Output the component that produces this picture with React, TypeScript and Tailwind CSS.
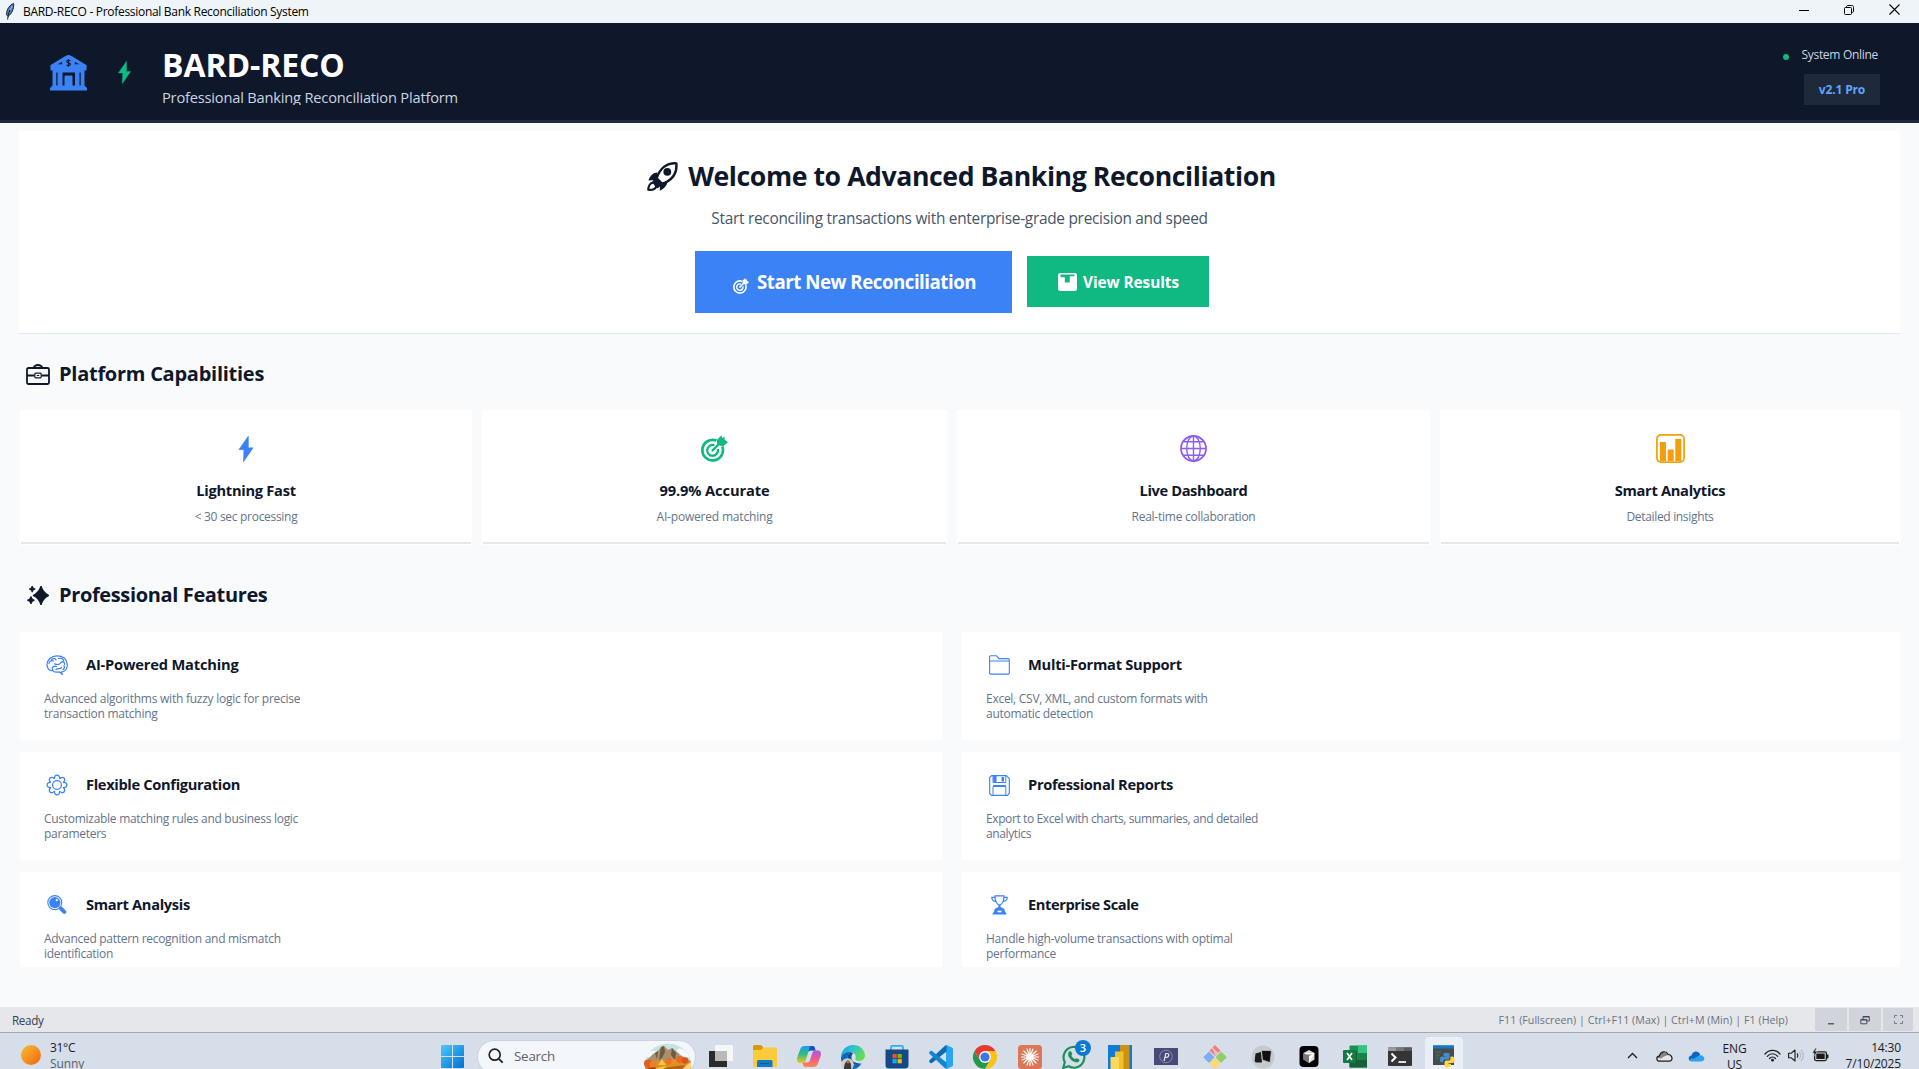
import React from "react";

type Kids = { children?: React.ReactNode };

/* ---------- shared drawings ---------- */

function Svg({ w, h, vb, className = "", children }: { w: number; h: number; vb?: string; className?: string } & Kids) {
  return (
    <svg width={w} height={h} viewBox={vb ?? `0 0 ${w} ${h}`} fill="none" className={`block shrink-0 ${className}`}>
      {children}
    </svg>
  );
}

const Feather = () => (
  <Svg w={10} h={17}>
    <path d="M8.6 .6C5 1.6 1.600 6 1.500 11.500L3 13.500C6.500 11 9.200 6 8.600 .6Z" fill="#4f87c4" stroke="#16202c" strokeWidth="1" />
    <path d="M6.800 3.500C4.500 7 3.200 11 2.600 16.500" stroke="#16202c" strokeWidth="1" />
    <path d="M7 3.200 5 7" stroke="#b8d6f2" strokeWidth="1" />
  </Svg>
);

const Bank = () => (
  <Svg w={37} h={36}>
    <path
      fillRule="evenodd"
      fill="#3b82f6"
      d="M18.500 0C19.500 0 20.500 .6 22 1.300L35.500 9.500C37 10.300 37 11.500 36.500 12V15.500H34.500V30.500L37 33V35.500H0V33L2.500 30.500V15.500H.5V12C0 11.500 0 10.300 1.500 9.500L15 1.300C16.500 .6 17.500 0 18.500 0ZM12 7 7.500 9.300H12.300ZM25 7 24.700 9.300H29.500ZM12.500 17.500V30.500H14.500V21.500C14.500 21 15 20.500 15.500 20.500H21.500C22 20.500 22.500 21 22.500 21.500V30.500H25V17.500ZM6.300 17.500V30.500H7.500V17.500ZM29.500 17.500V30.500H30.700V17.500Z"
    />
    <path d="M20.300 5.800C19.500 4.900 16.800 5 16.800 6.600 16.800 8.400 20.400 7.400 20.400 9.200 20.400 10.900 17.400 10.900 16.600 9.900M18.500 4.300V11.700" stroke="#0f172a" strokeWidth="1.100" />
  </Svg>
);

const Bolt = ({ w, h, className }: { w: number; h: number; className: string }) => (
  <Svg w={w} h={h} vb="0 0 14 24" className={className}>
    <path d="M9.200 0 .3 12.600H5L4.600 24 13.700 10.800H9.300Z" fill="currentColor" stroke="currentColor" strokeWidth=".4" strokeLinejoin="round" />
  </Svg>
);

const Rocket = () => (
  <Svg w={31} h={29}>
    <path d="M29.300 1.400C20 .8 12.500 6.500 9.200 17.500L14 22C24 19.500 30.500 12 29.300 1.400Z" stroke="#0f172a" strokeWidth="2.500" strokeLinejoin="round" />
    <circle cx="20.300" cy="9.800" r="3.900" fill="#0f172a" />
    <path d="M10.500 10.500C6 10.500 3 14 1.500 18.500L9.500 18ZM20.500 19.500C20.300 23 17 27 12.800 28.800L13 21.500Z" fill="#0f172a" />
    <path d="M9.500 14.500 5 20 8 24 10.500 26.500 16.500 21.500Z" fill="#0f172a" />
    <path d="M6.500 20.800C3 20.500 1.500 24 1.200 27.800 5 28 9 27 9.300 23.800" stroke="#0f172a" strokeWidth="2.100" strokeLinejoin="round" />
  </Svg>
);

const Target = ({ s, className }: { s: number; className: string }) => (
  <Svg w={s} h={s} vb="0 0 27 27" className={className}>
    <path d="M15.500 5.600A10.300 10.300 0 1 0 21.300 11.500" stroke="currentColor" strokeWidth="2.700" />
    <path d="M13.500 10.300A5.400 5.400 0 1 0 16.800 14" stroke="currentColor" strokeWidth="2.300" />
    <path d="M11.600 15.400 19 8" stroke="currentColor" strokeWidth="2.400" strokeLinecap="round" />
    <path d="M16 9.800V5L20.300 .2 21.300 3.300 23.500 1.500 23.700 4.800 27 7.200 22 11.300Z" fill="currentColor" />
  </Svg>
);

const ResultsIcon = () => (
  <Svg w={19} h={18}>
    <path fillRule="evenodd" d="M2.500 0H16.500A2.500 2.500 0 0 1 19 2.500V15.500A2.500 2.500 0 0 1 16.500 18H2.500A2.500 2.500 0 0 1 0 15.500V2.500A2.500 2.500 0 0 1 2.500 0ZM2.500 1.600V4.200H6.800V9.500H11.800V3.200H16.500V1.600Z" fill="#fff" />
  </Svg>
);

const Briefcase = () => (
  <Svg w={24} h={21}>
    <rect x="1" y="4" width="22" height="16" rx="1.500" stroke="#0f172a" strokeWidth="1.800" />
    <path d="M7.500 4C8.500 1.500 9.500 1 12 1S15.500 1.500 16.500 4M1 11.500H8.500M15.500 11.500H23" stroke="#0f172a" strokeWidth="1.800" />
    <rect x="8.800" y="9.200" width="6.400" height="4.600" rx="1" stroke="#0f172a" strokeWidth="1.200" />
    <path d="M10.800 11.500H13.200" stroke="#0f172a" />
  </Svg>
);

const Sparkles = () => (
  <Svg w={22} h={19}>
    <path d="M14 .3Q16 6.800 21.700 9.500 16 12.200 14 18.700 12 12.200 6.300 9.500 12 6.800 14 .3Z" fill="#0f172a" stroke="#0f172a" strokeWidth="1.300" strokeLinejoin="round" />
    <path d="M5.200 0Q5.700 2.600 8.200 3.100 5.700 3.600 5.200 6.200 4.700 3.600 2.200 3.100 4.700 2.600 5.200 0ZM4 10.500Q4.800 13.600 7.500 14.200 4.800 14.800 4 18 3.200 14.800 .3 14.200 3.200 13.600 4 10.500Z" fill="#0f172a" stroke="#0f172a" strokeWidth=".9" />
  </Svg>
);

const GlobeIcon = () => (
  <Svg w={27} h={27} className="text-[#8b5cf6]">
    <g stroke="currentColor" strokeWidth="1.400">
      <circle cx="13.500" cy="13.500" r="12.500" strokeWidth="1.800" />
      <ellipse cx="13.500" cy="13.500" rx="6.800" ry="12.500" />
      <path d="M13.500 1V26M1 13.500H26M3.300 6.800H23.700M3.300 20.200H23.700" />
    </g>
  </Svg>
);

const ChartIcon = () => (
  <Svg w={29} h={29}>
    <rect x=".9" y=".9" width="27.200" height="27.200" rx="4" stroke="#f59e0b" strokeWidth="1.700" />
    <path d="M4 8H10V27H4ZM11.700 15.500H17.700V27H11.700ZM19.300 5H25.300V27H19.300Z" fill="#f59e0b" />
  </Svg>
);

const BrainIcon = () => (
  <Svg w={22} h={20}>
    <g stroke="#3b82f6" strokeWidth="1.250" strokeLinecap="round">
      <path d="M6.500 15.500C3 16 .8 12.500 1 9.500 1.200 5 5 .8 11 .8 17 .8 21 4 21.300 9.500 21.600 14 18.500 16.500 15.500 17L16.200 19.300 13.500 17C10 17.500 7 17.300 6.500 14.500 5.500 12 8 10.500 10.500 11.500M3 8.500C3 6 5.500 5 7.500 6M5.500 4.500C7.500 3 9.500 3.500 10 5M12.500 3.500C15 2.500 17.500 4 17.800 6M8.500 8.800C11 9.800 14 9.500 15 7.500 16 6 19 7 18.500 9.500M10 14.500C12 12.500 14 14.500 15.500 12.500M17 14.500C18.500 13.500 19 12 18 11" />
    </g>
  </Svg>
);

const PETALS = [0, 45, 90, 135, 180, 225, 270, 315];

const GearIcon = () => (
  <Svg w={22} h={22} vb="-11 -11 22 22">
    <g stroke="#3b82f6" strokeWidth="1.250">
      <circle r="4.400" />
      {PETALS.map((a) => (
        <path key={a} transform={`rotate(${a})`} d="M-2.500-6C-3.400-11.200 3.400-11.200 2.500-6" />
      ))}
    </g>
  </Svg>
);

const MagnifierIcon = () => (
  <Svg w={20} h={20}>
    <circle cx="7.800" cy="7.600" r="7" stroke="#3b82f6" strokeWidth="1.100" />
    <circle cx="7.800" cy="7.600" r="5.600" fill="#3b82f6" />
    <circle cx="9.800" cy="5.200" r="1.100" fill="#fff" />
    <path d="M13.600 13.200 17.300 16.900" stroke="#3b82f6" strokeWidth="3.900" strokeLinecap="round" />
  </Svg>
);

const FolderIcon = () => (
  <Svg w={21} h={20}>
    <path d="M.6 18.400V1.500L1.500.8H7.500L10 3.600H19.500L20.300 4.400V18.400L19.500 19.100H1.400ZM.6 6H20" stroke="#3b82f6" strokeWidth="1.100" />
  </Svg>
);

const FloppyIcon = () => (
  <Svg w={21} h={21}>
    <path d="M2.600.6H17.200L20.300 3.400V18.200L18.400 20.300H2.600L.7 18.400V2.500Z" stroke="#3b82f6" strokeWidth="1.150" />
    <path d="M4 .6V7.500H16.800V.6M4 20V11.500H16.800V20M4 10.500H17" stroke="#3b82f6" strokeWidth="1" />
    <path d="M4.300 1H7.500V7.300H4.300ZM12.500 2H15V6.500H12.500Z" fill="#3b82f6" />
  </Svg>
);

const TrophyIcon = () => (
  <Svg w={17} h={20}>
    <path d="M4 .8H13C13 5 12.300 9 8.500 10 4.700 9 4 5 4 .8ZM3.800 2.300H.8C.8 4.500 2 6.500 4.500 6.300M13.200 2.300H16.200C16.200 4.500 15 6.500 12.500 6.300" stroke="#3b82f6" strokeWidth="1.200" />
    <path d="M7.500 10H9.500V12L13.500 14V15.500L15.800 19.600H1.200L3.500 15.500V14L7.500 12Z" fill="#3b82f6" />
    <path d="M6.500 15.700H10.500V17.300H6.500Z" fill="#fff" />
  </Svg>
);

/* ---------- window chrome ---------- */

function TitleBar() {
  return (
    <div className="flex h-[23px] items-center bg-[#eff4f9] pl-[5px] pr-[19px]">
      <Feather />
      <span className="ml-2 text-xs leading-[22px] tracking-[-0.3px] text-black">BARD-RECO - Professional Bank Reconciliation System</span>
      <div className="ml-auto flex items-center gap-[35px] pb-[4px] text-black">
        <Svg w={10} h={10}><path d="M0 5.500H10" stroke="currentColor" /></Svg>
        <Svg w={10} h={10}>
          <rect x=".5" y="2.500" width="7" height="7" rx="1" stroke="currentColor" />
          <path d="M2.500 2.500V2C2.500 1 3 .5 4 .5H7.500C9 .5 9.500 1 9.500 2.500V6C9.500 7 9 7.500 8 7.500" stroke="currentColor" />
        </Svg>
        <Svg w={11} h={11}><path d="M.5.5 10.500 10.500M10.500.5.5 10.500" stroke="currentColor" strokeWidth="1.100" /></Svg>
      </div>
    </div>
  );
}

function Header() {
  return (
    <header className="flex h-[100px] border-b-[3px] border-[#1e293b] bg-[#0f172a] pl-[50px] pr-[39px]">
      <div className="pt-[32px]"><Bank /></div>
      <div className="ml-[31px] pt-[38px]"><Bolt w={13} h={23} className="text-[#10b981]" /></div>
      <div className="ml-[31px] pt-[21px]">
        <h1 className="text-[32px] font-bold leading-[41px] tracking-[-0.1px] text-white">BARD-RECO</h1>
        <p className="h-[20px] overflow-hidden text-[14.67px] leading-[24px] tracking-[-0.2px] text-[#cbd5e1]">Professional Banking Reconciliation Platform</p>
      </div>
      <div className="ml-auto flex flex-col items-end pt-[23px]">
        <div className="flex items-center gap-[12px] pr-[2px]">
          <span className="mt-[3px] size-[6px] rounded-full bg-[#10b981]" />
          <span className="text-xs leading-[18px] tracking-[-0.3px] text-[#cbd5e1]">System Online</span>
        </div>
        <div className="mt-[10px] h-[31px] w-[76px] bg-[#1e293b] text-center text-xs font-bold leading-[31px] tracking-[-0.15px] text-[#60a5fa]">v2.1 Pro</div>
      </div>
    </header>
  );
}

/* ---------- content ---------- */

function Hero() {
  return (
    <section className="mx-[19px] mt-[8px] flex h-[203px] flex-col items-center border-b border-[#e2e8f0] bg-white pt-[27px]">
      <div className="flex h-[36px] items-center gap-[10px] pl-[4px]">
        <Rocket />
        <h2 className="text-[26.67px] font-bold leading-[34px] tracking-[-0.43px] text-[#0f172a]">Welcome to Advanced Banking Reconciliation</h2>
      </div>
      <p className="mt-[13px] text-[15.4px] leading-6 tracking-[-0.27px] text-[#475569]">Start reconciling transactions with enterprise-grade precision and speed</p>
      <div className="mt-[20px] flex items-start gap-[15px] pr-[15px]">
        <button className="flex h-[62px] w-[317px] items-center bg-[#3b82f6] pl-[38px]">
          <Target s={16} className="mt-2 text-white" />
          <span className="ml-2 whitespace-nowrap text-[18.67px] font-bold leading-6 tracking-[-0.47px] text-white">Start New Reconciliation</span>
        </button>
        <button className="mt-[5px] flex h-[51px] w-[182px] items-center bg-[#10b981] pl-[31px]">
          <ResultsIcon />
          <span className="ml-[6px] mt-px whitespace-nowrap text-[15.33px] font-bold leading-6 tracking-[-0.05px] text-white">View Results</span>
        </button>
      </div>
    </section>
  );
}

function SectionTitle({ icon, children, className }: { icon: React.ReactNode; className: string } & Kids) {
  return (
    <div className={`flex items-center ${className}`}>
      {icon}
      <h3 className="text-[20px] font-bold leading-7 text-[#0f172a]">{children}</h3>
    </div>
  );
}

function Capability({ icon, title, sub, titleClass, subClass }: { icon: React.ReactNode; title: string; sub: string; titleClass: string; subClass: string }) {
  return (
    <div className="flex flex-col items-center bg-white px-px pb-px">
      <div className="flex h-[69px] items-center pt-[8px]">{icon}</div>
      <h4 className={`text-[14.67px] font-bold leading-[22px] text-[#0f172a] ${titleClass}`}>{title}</h4>
      <p className={`mt-[7px] text-xs leading-[18px] text-[#64748b] ${subClass}`}>{sub}</p>
      <div className="mt-auto h-[2px] w-full bg-[#e5e7eb]" />
    </div>
  );
}

function Feature({ icon, title, lines, titleClass, lineClass }: { icon: React.ReactNode; title: string; lines: [string, string]; titleClass: string; lineClass: string }) {
  return (
    <div className="overflow-hidden bg-white pl-[24px] pt-[21px]">
      <div className="flex h-[24px] items-center">
        <div className="flex w-[26px] justify-center">{icon}</div>
        <h4 className={`mb-[2px] ml-[16px] text-[14.67px] font-bold leading-6 text-[#0f172a] ${titleClass}`}>{title}</h4>
      </div>
      <p className={`mt-[14px] text-xs leading-[15px] text-[#64748b] ${lineClass}`}>
        {lines[0]}
        <br />
        {lines[1]}
      </p>
    </div>
  );
}

function StatusBar() {
  return (
    <div className="flex h-[26px] items-center border-b border-[#a3a7ae] bg-[#e5e7eb] pl-3 pr-[6px]">
      <span className="text-[11.7px] leading-5 tracking-[-0.35px] text-[#374151]">Ready</span>
      <span className="ml-auto mr-[27px] text-[10.67px] leading-5 tracking-[0.03px] text-[#6b7280]">F11 (Fullscreen) | Ctrl+F11 (Max) | Ctrl+M (Min) | F1 (Help)</span>
      <div className="flex h-[23px] gap-[2px] text-[#374151]">
        <div className="flex w-8 items-center justify-center bg-[#d1d5db]">
          <Svg w={10} h={10}><path d="M2 8.800H8" stroke="currentColor" strokeWidth="1.200" /></Svg>
        </div>
        <div className="flex w-8 items-center justify-center bg-[#d1d5db]">
          <Svg w={10} h={10}><path d="M3 4V1.500H9.300V6H7M.8 4.500H6.800V8.800H.8ZM.8 5H6.800M3 2H9" stroke="currentColor" strokeWidth=".9" /></Svg>
        </div>
        <div className="flex w-[30px] items-center justify-center bg-[#d1d5db] text-[#6b7280]">
          <Svg w={9} h={9}><path d="M.5 3V.5H3M6 .5H8.500V3M8.500 6V8.500H6M3 8.500H.5V6" stroke="currentColor" strokeWidth=".9" /></Svg>
        </div>
      </div>
    </div>
  );
}

/* ---------- taskbar ---------- */

const Windows = () => (
  <Svg w={23} h={23}>
    <defs>
      <linearGradient id="win" x1="0" y1="0" x2="1" y2="1"><stop stopColor="#4cc9fb" /><stop offset="1" stopColor="#0070d0" /></linearGradient>
    </defs>
    <path d="M0 1A1 1 0 0 1 1 0H11V11H0ZM12 0H22A1 1 0 0 1 23 1V11H12ZM0 12H11V23H1A1 1 0 0 1 0 22ZM12 12H23V22A1 1 0 0 1 22 23H12Z" fill="url(#win)" />
  </Svg>
);

const SearchArt = () => (
  <Svg w={49} h={28}>
    <defs>
      <clipPath id="art"><ellipse cx="25" cy="22" rx="23" ry="21.500" /></clipPath>
    </defs>
    <g clipPath="url(#art)">
      <rect width="49" height="28" fill="#c3e3e6" />
      <path d="M3 13C6 7 11 7 14 9L18 14H3ZM34 7C37 3 43 8 47 14H32Z" fill="#f5f9f9" />
      <path d="M3 18 10 11 15 8 18 4 21 3 25 7 29 5 34 9 39 13 46 17V22H3Z" fill="#a98f6a" />
      <path d="M18 4 21 3 22 9 19 15 16 17ZM29 5 33 10 32 17 28 12ZM12 10 15 8 14 16Z" fill="#6d5b48" />
      <path d="M36 11 42 16 37 17Z" fill="#d1b88c" />
      <rect y="17.500" width="49" height="11" fill="#d98a24" />
    </g>
    <path d="M5 21 14 19 24 20 36 18 44 19 48 22 46 28H8Z" fill="#dd8f26" />
    <circle cx="5" cy="20.500" r="4" fill="#e2601c" />
    <circle cx="10" cy="21.500" r="3.300" fill="#ee7f2a" />
    <circle cx="37" cy="16.500" r="3.600" fill="#ea6a1e" />
    <circle cx="42" cy="17.500" r="3.200" fill="#dd5418" />
    <circle cx="26" cy="18" r="3" fill="#ee6f22" />
    <circle cx="31" cy="18.500" r="2.600" fill="#f08a30" />
    <path d="M15 22 19 16 23 22ZM10 26 22 23 28 28H10Z" fill="#f8c53e" />
    <path d="M20 25 42 22 38 28H24Z" fill="#b06414" />
    <path d="M40 26 44 22 48 19 48.500 23 46 28H41Z" fill="#fbd585" />
    <path d="M4 25 12 24 14 28H7Z" fill="#a34a12" />
  </Svg>
);

const TaskView = () => (
  <Svg w={24} h={24}>
    <rect x="0" y="6" width="18" height="16" fill="#2b2b2b" />
    <rect x="6" y="0" width="18" height="16" fill="#f5f6f8" />
    <rect x="6" y="6" width="12" height="10" fill="#b9b9b9" />
  </Svg>
);

const Explorer = () => (
  <Svg w={24} h={24}>
    <path d="M0 1.500Q0 0 1.500 0H8L10 2V6H0Z" fill="#d99a0b" />
    <path d="M0 5H8L10.500 2.500H23Q24 2.500 24 3.500V21Q24 22 23 22H1Q0 22 0 21Z" fill="#fccb3b" />
    <path d="M4 22V16.500Q4 15 5.500 15H18Q19.500 15 19.500 16.500V22Z" fill="#1079c9" />
    <path d="M7 18.500H16" stroke="#0b5a9c" strokeWidth="1" />
  </Svg>
);

const Copilot = () => (
  <Svg w={24} h={24}>
    <defs>
      <linearGradient id="cpa" x1="0" y1="0" x2="0" y2="1"><stop stopColor="#1a9cf0" /><stop offset=".5" stopColor="#36bd79" /><stop offset="1" stopColor="#f2c81f" /></linearGradient>
      <linearGradient id="cpb" x1="0" y1="0" x2="0" y2="1"><stop stopColor="#a35be6" /><stop offset=".5" stopColor="#ee5a8c" /><stop offset="1" stopColor="#fb8a4b" /></linearGradient>
    </defs>
    <path d="M8 1H15.500C17.500 1 18 3 18.500 5.500H14C12 5.500 11.500 6.500 11 8L8.500 16C8 17.500 6.500 18 5 18H3C0 18-.5 14.500.5 11.500L3.500 3.500C4.300 1.800 5.500 1 8 1Z" fill="url(#cpa)" />
    <path d="M15.500 1C17.500 1 18 3 18.500 5.500H14C12.500 5.500 12 6 11.500 7L13 1Z" fill="#1b50c4" />
    <path d="M16 22H8.500C6.500 22 6 20 5.500 17.500H10C12 17.500 12.500 16.500 13 15L15.500 7.500C16 6 17.500 5.500 19 5.500H21C24 5.500 24.500 8.500 23.500 11.500L20.500 19.500C19.700 21.200 18.500 22 16 22Z" fill="url(#cpb)" />
  </Svg>
);

const Edge = () => (
  <Svg w={24} h={24}>
    <defs>
      <linearGradient id="edg" x1="0" y1="0" x2="1" y2=".5"><stop stopColor="#1a9ce8" /><stop offset=".5" stopColor="#2fc5c8" /><stop offset="1" stopColor="#68dc51" /></linearGradient>
    </defs>
    <path d="M12 0C19 0 24 5 24 10.500 24 14 21 16 18 16 15.500 16 14 15 14.500 13.500 16 10 12.500 7 9 7 4 7 1 10.500 0 13.500-.5 6 5 0 12 0Z" fill="url(#edg)" />
    <path d="M0 13C1 9 5 6.500 9 7 7 8.500 6.500 11 7 14 8 18.500 13 21 20 19.500 17.500 22.500 15 24 12 24 5.500 24 0 19 0 13Z" fill="#1068bd" />
    <path d="M9 7C7 8.500 6.500 11 7 14 8 18.500 13 21 20 19.500 22 18 16 19 13 17 9.500 14.500 10 11 12 8Z" fill="#0d4d94" />
    <circle cx="6.500" cy="19.500" r="6.300" fill="#cfd0cc" />
    <path d="M3 24C3 20 4 17.500 5.500 16.500L8.500 16.500C10 18 10.500 21 10 24Z" fill="#3e3835" />
    <circle cx="7" cy="16.800" r="1.700" fill="#9a7862" />
  </Svg>
);

const Store = () => (
  <Svg w={24} h={24}>
    <path d="M6 5V2Q6 .8 7.200.8H16.800Q18 .8 18 2V5" stroke="#29b1f0" strokeWidth="1.700" />
    <path d="M.5 4.500H23.500V20Q23.500 23.500 20 23.500H4Q.5 23.500.5 20Z" fill="#164a86" />
    <rect x="7.500" y="9" width="4.200" height="4.200" fill="#f25022" />
    <rect x="12.600" y="9" width="4.200" height="4.200" fill="#7fba00" />
    <rect x="7.500" y="14.100" width="4.200" height="4.200" fill="#1ea7ee" />
    <rect x="12.600" y="14.100" width="4.200" height="4.200" fill="#ffb900" />
  </Svg>
);

const VsCode = () => (
  <Svg w={24} h={24}>
    <path d="M17.500 0 23 2.500Q24 3 24 4V20Q24 21 23 21.500L17.500 24 17 23V1Z" fill="#2aa5f0" />
    <path d="M17.500 0V6.500L3 18 1.500 18.200.2 16.800V15.500L16 .8Z" fill="#0a6cb3" />
    <path d="M17.500 24V17.500L3 6 1.500 5.800.2 7.200V8.500L16 23.200Z" fill="#1386cf" />
  </Svg>
);

const Chrome = () => (
  <Svg w={24} h={24} vb="-12 -12 24 24">
    <path d="M0 0-10.400-6A12 12 0 0 1 10.400-6Z" fill="#e33b2e" />
    <path d="M-5.200 3-10.400-6A12 12 0 0 0 0 12L5.200 3Z" fill="#219a4b" />
    <path d="M5.200 3 0 12A12 12 0 0 0 10.400-6H0Z" fill="#fbc116" />
    <path d="M-10.400-6-5.200 3 0-6Z" fill="#e33b2e" />
    <circle r="5.900" fill="#fff" />
    <circle r="4.600" fill="#3b78e7" />
  </Svg>
);

const Claude = () => (
  <Svg w={24} h={24} vb="-12 -12 24 24">
    <rect x="-12" y="-12" width="24" height="24" rx="3.500" fill="#d97757" />
    <path d="M0-8.500V8.500M-8.500 0H8.500M-6.200-6 6.200 6M6.200-6-6.200 6M-3-8 3 8M3-8-3 8M-8-3 8 3M8-3-8 3" stroke="#fff" strokeWidth="1.150" strokeLinecap="round" />
  </Svg>
);

const WhatsApp = () => (
  <div className="relative">
    <Svg w={24} h={24}>
      <path d="M1.300 22.800 2.800 17.200A10.400 10.400 0 1 1 6.800 21.300Z" stroke="#1f8f5c" strokeWidth="2.200" />
      <path d="M7.200 6.500C8.500 5.300 9.200 6 10.300 9 9.300 10.300 9.200 10.500 10.500 12.300 12 14 13.500 14.300 14.800 13.300 17.500 14.500 18.200 15 17 16.500 15 18.500 11 17 8.800 14.600 6.500 12 5 8.700 7.200 6.500Z" fill="#1f8f5c" />
    </Svg>
    <span className="absolute -right-[5px] -top-[5px] size-4 rounded-full bg-[#0f78d4] text-center text-[11px] font-semibold leading-4 text-white">3</span>
  </div>
);

const PowerBi = () => (
  <Svg w={24} h={24}>
    <rect width="24" height="24" fill="#0f7bd4" />
    <rect x="12" width="9.500" height="24" fill="#cf9210" />
    <rect x="7" y="6.500" width="8.500" height="17.500" fill="#f2c12e" />
    <rect x="2.500" y="12" width="8.500" height="12" fill="#f8d95a" />
  </Svg>
);

const PApp = () => (
  <Svg w={24} h={24}>
    <rect x="0" y="3" width="24" height="17" fill="#484a78" />
    <circle cx="12" cy="11.500" r="6.300" stroke="#8f90ad" strokeWidth=".9" />
    <path d="M10 16 11.800 8.500H13.500C15.500 8.500 15 12.300 12.800 12.300H11" stroke="#e5e5ee" strokeWidth="1.200" />
  </Svg>
);

const Git = () => (
  <Svg w={24} h={24}>
    <path d="M12 0 17.500 5.500 12 11 6.500 5.500Z" fill="#f87c7c" />
    <path d="M18 6.500 23.800 12.200 18 18 12.500 12.200Z" fill="#8fce69" />
    <path d="M6 6.500 11.500 12.200 6 18 .2 12.200Z" fill="#7fabf7" />
    <path d="M12 13 17.500 18.500 12 24 6.500 18.500Z" fill="#fbd96b" />
    <path d="M9 2.500 12 6.500V10M12 6 15 9" stroke="#d8dfea" strokeWidth="1.100" />
  </Svg>
);

const Tiles = () => (
  <Svg w={24} h={24}>
    <circle cx="12" cy="12" r="11.500" fill="#c5cacd" />
    <path d="M4.500 8.500 10 7 11 17.500H5.500Q3.500 17.500 3.700 15.500Z" fill="#1b1b1d" />
    <path d="M10.500 5.500H19Q20.500 5.500 20.300 7L19 17.500 11.500 15Z" fill="#101012" stroke="#c5cacd" strokeWidth=".7" />
  </Svg>
);

const Cursor = () => (
  <Svg w={24} h={24}>
    <rect x="2.500" y="1" width="19" height="21" rx="4" fill="#050505" />
    <path d="M12 5 17.500 8V14.500L12 18 6.500 14.500V8Z" fill="#d9d9d9" />
    <path d="M6.500 8 17.500 8 12 18V11Z" fill="#fff" />
    <path d="M6.500 8 12 11V18L6.500 14.500ZM12 11 9 9.500H15Z" fill="#777" />
  </Svg>
);

const Excel = () => (
  <Svg w={24} h={24}>
    <path d="M6.500 1.500Q6.500 .5 7.500.5H24V22.500H7.500Q6.500 22.500 6.500 21.500Z" fill="#1e8f51" />
    <path d="M15 .5H24V8H15Z" fill="#33c481" />
    <path d="M15 8H24V15H15Z" fill="#1d8048" />
    <path d="M6.500 15H24V22.500H6.500Z" fill="#17603a" />
    <path d="M6.500 6H14V18H6.500Z" fill="#0f5a33" />
    <rect y="5" width="13" height="13" rx="1" fill="#107c41" />
    <path d="M4 8 9 15M9 8 4 15" stroke="#fff" strokeWidth="1.700" />
  </Svg>
);

const Terminal = () => (
  <Svg w={24} h={24}>
    <rect x="0" y="2.500" width="24" height="18.500" rx="1" fill="#353535" />
    <path d="M0 2.500H8V6H0Z" fill="#9a9a9a" />
    <path d="M8 2.500H16V6H8Z" fill="#777" />
    <path d="M16 2.500H24V6H16Z" fill="#5b5b5b" />
    <path d="M3.500 8.500 7.500 12.500 3.500 16.500" stroke="#fff" strokeWidth="2" />
    <path d="M10.500 17H18" stroke="#fff" strokeWidth="1.700" />
  </Svg>
);

const Python = () => (
  <Svg w={24} h={24}>
    <rect x="1" y=".5" width="21" height="19.500" fill="#454c4f" />
    <rect x="1" y=".5" width="21" height="3" fill="#1478c8" />
    <path d="M3.500 7H9M3.500 10H8M3.500 13H7" stroke="#49784c" strokeWidth="1" />
    <path d="M11.500 8.500Q14.500 7 17.500 8.500V13Q17.500 14.500 16 14.500H13Q11 14.500 11 17.500 7 17.500 8 13 8.500 11.500 10 11.500H14V11H11.500Z" fill="#4a8cc7" />
    <path d="M18.500 11.500H20.500Q23 12 22.500 16 22 18 20.500 18H16.500V18.800H19V21Q16 23.500 12.500 21.500V17.500Q12.500 15.500 14.500 15.500H17Q18.500 15.500 18.500 13.500Z" fill="#fbd548" />
  </Svg>
);

function Taskbar() {
  const icons: [string, React.ReactNode][] = [
    ["ml-[13px]", <TaskView />],
    ["ml-[20px]", <Explorer />],
    ["ml-[20px]", <Copilot />],
    ["ml-[20px]", <Edge />],
    ["ml-[20px]", <Store />],
    ["ml-[20px]", <VsCode />],
    ["ml-[20px]", <Chrome />],
    ["ml-[21px]", <Claude />],
    ["ml-[20px]", <WhatsApp />],
    ["ml-[22px]", <PowerBi />],
    ["ml-[22px]", <PApp />],
    ["ml-[25px]", <Git />],
    ["ml-[24px]", <Tiles />],
    ["ml-[22px]", <Cursor />],
    ["ml-[22px]", <Excel />],
    ["ml-[21px]", <Terminal />],
  ];
  return (
    <footer className="flex h-[36px] items-start overflow-hidden bg-[#d6deea] text-xs text-[#1b1b1b]">
      <div className="flex w-[441px] shrink-0 pl-[21px] pt-[3px]">
        <div className="mt-[9px] size-5 rounded-full bg-linear-to-br from-[#f0bf32] to-[#f2600c]" />
        <div className="ml-[9px] whitespace-nowrap leading-4">
          <div className="pt-[4px] tracking-[-0.3px]">31°C</div>
          <div className="tracking-[-0.1px] text-[#5b6068]">Sunny</div>
        </div>
      </div>
      <div className="flex shrink-0 items-start">
        <div className="mt-3"><Windows /></div>
        <div className="ml-[13px] mt-[7px] flex h-[34px] w-[219px] items-start rounded-full border border-[#c9d2de] bg-[#f3f6fa] pl-[10px]">
          <div className="mt-[7px]">
            <Svg w={16} h={16}><circle cx="6.700" cy="6.700" r="5.500" stroke="#222" strokeWidth="1.700" /><path d="M10.800 10.800 14.700 14.700" stroke="#222" strokeWidth="1.900" /></Svg>
          </div>
          <span className="ml-[10px] mt-[5px] text-[13.33px] leading-5 tracking-[-0.2px] text-[#5f6266]">Search</span>
          <div className="ml-auto mr-[3px] mt-[2px]"><SearchArt /></div>
        </div>
        {icons.map(([gap, icon], i) => (
          <div key={i} className={`mt-3 shrink-0 ${gap}`}>{icon}</div>
        ))}
        <div className="ml-[13px] mt-[4px] flex h-10 w-[38px] justify-center rounded-[4px] bg-[#e9eff5] pt-2"><Python /></div>
      </div>
      <div className="ml-auto flex items-start pr-[18px]">
        <Svg w={11} h={7} className="mt-[19px]"><path d="M1 6 5.500 1.500 10 6" stroke="#1b1b1b" strokeWidth="1.300" /></Svg>
        <Svg w={17} h={12} className="ml-[18px] mt-[17px]">
          <path d="M4 11.200C-.3 11.200 0 6.300 3.500 5.800 4.500 1.500 10 0 12.200 4.500 16.500 4.800 17.500 10.500 13.500 11.200Z" fill="#e7e7e7" />
          <path d="M1.500 8C2 6 3 5.800 4 5.800 5.500 1.500 10 1 12 5L8 6.500 5 8.500Z" fill="#858585" />
          <path d="M4 11.200C-.3 11.200 0 6.300 3.500 5.800 4.500 1.500 10 0 12.200 4.500 16.500 4.800 17.500 10.500 13.500 11.200Z" stroke="#1b1b1b" strokeWidth="1.200" />
        </Svg>
        <Svg w={17} h={12} className="ml-[15px] mt-[17px]">
          <path d="M4 11.200C-.3 11.200-.3 6 3.500 5.600 4.500 1 10 0 12.200 4.500L9 9Z" fill="#0f66bd" />
          <path d="M4 11.500H13.500C17.500 11 17.300 5.500 12.500 5.200 9 5.500 8 9 4 8.500 1 8.800 1 11.500 4 11.500Z" fill="#2aa3ec" />
        </Svg>
        <div className="ml-[17px] w-[25px] whitespace-nowrap pt-[8px] text-center leading-4 tracking-[-0.1px]">
          <div>ENG</div>
          <div>US</div>
        </div>
        <Svg w={17} h={13} className="ml-[17px] mt-[16px]">
          <g stroke="#1b1b1b" strokeWidth="1.200" strokeLinecap="round">
            <path d="M1 5C5 .2 12 .2 16 5M3.300 7.300C6.200 3.900 10.800 3.900 13.700 7.300M5.500 9.500C7.200 7.500 9.800 7.500 11.500 9.500" />
          </g>
          <circle cx="8.500" cy="11.200" r="1.400" fill="#1b1b1b" />
        </Svg>
        <Svg w={16} h={13} className="ml-[7px] mt-[16px]">
          <path d="M.6 4.300H3L7 1V12L3 8.700H.6Z" stroke="#1b1b1b" strokeWidth="1.100" strokeLinejoin="round" />
          <path d="M9 4.500C10 5.500 10 7.500 9 8.500" stroke="#1b1b1b" strokeWidth="1.100" />
          <path d="M11 2.700C13 4.700 13 8.300 11 10.300M13 1C16 4 16 9 13 12" stroke="#a9aeb6" strokeWidth="1" />
        </Svg>
        <Svg w={17} h={14} className="ml-[8px] mt-[15px]">
          <rect x="2.600" y="3.900" width="11.800" height="8.700" rx="1.500" stroke="#1b1b1b" strokeWidth="1.300" />
          <rect x="4.300" y="5.500" width="8.400" height="5.500" fill="#1b1b1b" />
          <path d="M15.700 6.500V10.300" stroke="#1b1b1b" strokeWidth="1.500" />
          <path d="M3.500 0 .3 5H2.300L1.500 9 5.500 3.500H3.300L4.500 0Z" fill="#1b1b1b" stroke="#d6deea" strokeWidth=".5" />
        </Svg>
        <div className="ml-[15px] w-[57px] whitespace-nowrap pt-[7px] text-right leading-4 tracking-[-0.15px]">
          <div>14:30</div>
          <div>7/10/2025</div>
        </div>
      </div>
    </footer>
  );
}

export default function App() {
  return (
    <div className="flex h-[1069px] w-[1919px] flex-col overflow-hidden bg-[#f8fafc] font-['Open_Sans','Noto_Sans',sans-serif]">
      <TitleBar />
      <Header />
      <main className="flex-1">
        <Hero />
        <SectionTitle className="mt-[26px] gap-[9px] pl-[26px]" icon={<Briefcase />}>
          <span className="tracking-[-0.26px]">Platform Capabilities</span>
        </SectionTitle>
        <div className="mt-[22px] grid h-[135px] grid-cols-[452px_465px_473px_460px] gap-[10px] pl-5">
          <Capability icon={<Bolt w={16} h={26} className="text-[#3b82f6]" />} title="Lightning Fast" sub="< 30 sec processing" titleClass="tracking-[-0.28px]" subClass="tracking-[-0.3px]" />
          <Capability icon={<Target s={27} className="text-[#10b981]" />} title="99.9% Accurate" sub="AI-powered matching" titleClass="tracking-[-0.12px]" subClass="tracking-[-0.19px]" />
          <Capability icon={<GlobeIcon />} title="Live Dashboard" sub="Real-time collaboration" titleClass="tracking-[-0.38px]" subClass="tracking-[-0.25px]" />
          <Capability icon={<ChartIcon />} title="Smart Analytics" sub="Detailed insights" titleClass="tracking-[-0.31px]" subClass="tracking-[-0.33px]" />
        </div>
        <SectionTitle className="mt-[36px] gap-[10px] pl-[27px]" icon={<Sparkles />}>
          <span className="tracking-[-0.36px]">Professional Features</span>
        </SectionTitle>
        <div className="mt-[23px] grid grid-cols-[922px_938px] grid-rows-[108px_108px_95px] gap-x-5 gap-y-3 pl-5">
          <Feature icon={<BrainIcon />} title="AI-Powered Matching" lines={["Advanced algorithms with fuzzy logic for precise", "transaction matching"]} titleClass="tracking-[-0.19px]" lineClass="tracking-[-0.24px]" />
          <Feature icon={<FolderIcon />} title="Multi-Format Support" lines={["Excel, CSV, XML, and custom formats with", "automatic detection"]} titleClass="tracking-[-0.26px]" lineClass="tracking-[-0.27px]" />
          <Feature icon={<GearIcon />} title="Flexible Configuration" lines={["Customizable matching rules and business logic", "parameters"]} titleClass="tracking-[-0.34px]" lineClass="tracking-[-0.28px]" />
          <Feature icon={<FloppyIcon />} title="Professional Reports" lines={["Export to Excel with charts, summaries, and detailed", "analytics"]} titleClass="tracking-[-0.31px]" lineClass="tracking-[-0.39px]" />
          <Feature icon={<MagnifierIcon />} title="Smart Analysis" lines={["Advanced pattern recognition and mismatch", "identification"]} titleClass="tracking-[-0.34px]" lineClass="tracking-[-0.29px]" />
          <Feature icon={<TrophyIcon />} title="Enterprise Scale" lines={["Handle high-volume transactions with optimal", "performance"]} titleClass="tracking-[-0.42px]" lineClass="tracking-[-0.25px]" />
        </div>
      </main>
      <StatusBar />
      <Taskbar />
    </div>
  );
}
